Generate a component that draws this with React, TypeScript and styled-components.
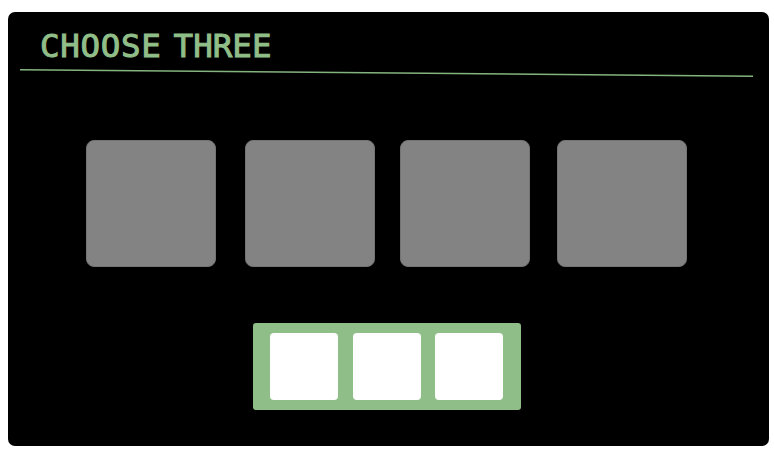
import React from "react";
import styled, { createGlobalStyle } from "styled-components";

const GlobalStyle = createGlobalStyle`
  * { box-sizing: border-box; }
  body { margin: 0; background: #fff; overflow: hidden; }
`;

const Page = styled.main`
  width: 774px;
  height: 460px;
  padding: 12px 5px 14px 8px;
`;

const Board = styled.section`
  height: 434px;
  display: flex;
  flex-direction: column;
  background: #000;
  border-radius: 7px;
`;

const Title = styled.h1`
  display: flex;
  gap: 12px;
  height: 56px;
  margin: 0;
  padding: 17px 0 0 32px;
  color: #90be88;
  font: 400 32.5px/34px "DejaVu Sans Mono", monospace;
  -webkit-text-stroke: 1px #90be88;
`;

const Word = styled.span<{ $spacing: number }>`
  letter-spacing: ${(p) => p.$spacing}px;
`;

const Rule = styled.svg`
  display: block;
  flex: none;
  width: 733px;
  height: 10px;
  margin-left: 12px;
`;

const Cards = styled.div`
  display: grid;
  grid-template-columns: 130px 130px 130px 130px;
  column-gap: 29px;
  height: 127px;
  margin: 62px 0 0 78px;
`;

const Card = styled.div<{ $shift?: number }>`
  margin: 0 ${(p) => p.$shift ?? 0}px 0 ${(p) => -(p.$shift ?? 0)}px;
  background: #838383;
  border: 1px solid #747474;
  border-radius: 8px;
`;

const Tray = styled.div`
  display: grid;
  grid-template-columns: 68px 68px 68px;
  column-gap: 15px;
  width: 267.5px;
  height: 87px;
  margin: 56px 0 0 245px;
  padding: 10px 0 10px 17px;
  background: #90be88;
  border-radius: 3px;
`;

const Slot = styled.div<{ $shift?: number }>`
  margin: 0 ${(p) => p.$shift ?? 0}px 0 ${(p) => -(p.$shift ?? 0)}px;
  background: #fff;
  border-radius: 4px;
`;

export default function App() {
  return (
    <>
      <GlobalStyle />
      <Page>
        <Board>
          <Title>
            <Word $spacing={0.7}>CHOOSE</Word>
            <Word $spacing={0}>THREE</Word>
          </Title>
          <Rule viewBox="0 0 733 10" aria-hidden="true">
            <line x1="0" y1="1.8" x2="733" y2="8.2" stroke="#84b47d" strokeWidth="1.5" />
          </Rule>
          <Cards>
            <Card />
            <Card />
            <Card $shift={4} />
            <Card $shift={6} />
          </Cards>
          <Tray>
            <Slot />
            <Slot />
            <Slot $shift={1} />
          </Tray>
        </Board>
      </Page>
    </>
  );
}
